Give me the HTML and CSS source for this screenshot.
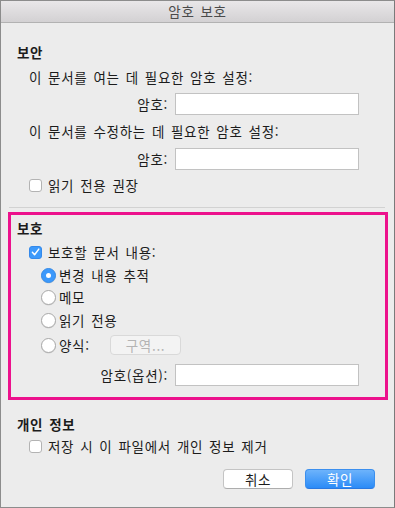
FILE: index.html
```html
<!DOCTYPE html>
<html lang="ko">
<head>
<meta charset="utf-8">
<link rel="stylesheet" href="styles.css">
</head>
<body>
<div class="window">
  <div class="titlebar">암호 보호</div>
  <div class="content">
    <div class="row head">보안</div>
    <div class="row text indent1 gap5">이 문서를 여는 데 필요한 암호 설정:</div>
    <div class="field gap6"><span class="label">암호:</span><span class="input"></span></div>
    <div class="row text indent1 gap6">이 문서를 수정하는 데 필요한 암호 설정:</div>
    <div class="field gap7"><span class="label">암호:</span><span class="input"></span></div>
    <div class="row check gap5"><span class="cb"></span><span>읽기 전용 권장</span></div>
    <div class="separator"></div>

    <div class="protect">
      <div class="row head">보호</div>
      <div class="row check pcheck gap4"><span class="cb on"><svg viewBox="0 0 12 12" width="12" height="12"><path d="M2.6 6.4 L5 9 L9.6 2.8" fill="none" stroke="#fff" stroke-width="1.6" stroke-linecap="round" stroke-linejoin="round"/></svg></span><span>보호할 문서 내용:</span></div>
      <div class="row radio gap3"><span class="rb on"></span><span>변경 내용 추적</span></div>
      <div class="row radio gap2"><span class="rb"></span><span>메모</span></div>
      <div class="row radio gap3"><span class="rb"></span><span>읽기 전용</span></div>
      <div class="row radio gap5"><span class="rb"></span><span class="form-label">양식:</span><span class="btn-disabled">구역...</span></div>
      <div class="field gap9"><span class="label">암호(옵션):</span><span class="input"></span></div>
    </div>

    <div class="row head gap14">개인 정보</div>
    <div class="row check gap2"><span class="cb"></span><span>저장 시 이 파일에서 개인 정보 제거</span></div>
    <div class="buttons">
      <span class="btn">취소</span>
      <span class="btn primary">확인</span>
    </div>
  </div>
</div>
</body>
</html>
```

FILE: styles.css
```css
* { box-sizing: border-box; }
html, body { margin: 0; padding: 0; }
body {
  width: 395px;
  height: 508px;
  font-family: "Noto Sans CJK KR", "Noto Sans", sans-serif;
  font-size: 13.5px;
  letter-spacing: 0.7px;
  word-spacing: 1.5px;
  color: #1c1c1c;
  background: #ececec;
}
.window {
  width: 395px;
  height: 508px;
  border: 1px solid #8c8c8c;
  border-right-color: #7a7a7a;
  background: #ececec;
  display: flex;
  flex-direction: column;
}
.titlebar {
  height: 22px;
  flex: none;
  background: linear-gradient(#e9e7e9, #d3d1d3);
  border-bottom: 1px solid #b2b2b2;
  text-align: center;
  line-height: 20px;
  color: #4a4a4a;
  font-size: 13.5px;
}
.content {
  padding: 19px 0 0 16px;
  display: flex;
  flex-direction: column;
}
.row {
  height: 20px;
  display: flex;
  align-items: center;
  white-space: nowrap;
}
.head { font-weight: bold; }
.indent1 { padding-left: 12px; }
.gap2 { margin-top: 2px; }
.gap3 { margin-top: 3px; }
.gap4 { margin-top: 4px; }
.gap5 { margin-top: 5px; }
.gap6 { margin-top: 6px; }
.gap7 { margin-top: 7px; }
.gap9 { margin-top: 9px; }
.gap14 { margin-top: 14px; }

.field {
  height: 22px;
  display: flex;
  align-items: center;
}
.label {
  width: 158px;
  text-align: right;
  padding-right: 7px;
  white-space: nowrap;
}
.input {
  width: 184px;
  height: 22px;
  background: #fff;
  border: 1px solid #c2c2c2;
}

.check { padding-left: 12px; }
.cb {
  width: 13px;
  height: 13px;
  border: 1px solid #b3b3b3;
  border-radius: 3px;
  background: #fff;
  margin-right: 6px;
  flex: none;
  display: flex;
  align-items: center;
  justify-content: center;
}
.cb.on {
  background: #3c99fb;
  border-color: #3489ea;
}
.separator {
  height: 1px;
  background: #d2d2d2;
  margin: 12px 9px 0 -8px;
}
.protect {
  margin: 4px 6px 0 -9px;
  height: 188px;
  border: 3px solid #ec118c;
  padding: 3px 0 0 6px;
  display: flex;
  flex-direction: column;
}
.radio { padding-left: 24px; }
.rb {
  width: 15px;
  height: 15px;
  border-radius: 50%;
  background: #fff;
  border: 1px solid #a9a9a9;
  box-shadow: 0 0.5px 0.5px rgba(0,0,0,0.12);
  margin-right: 3px;
  flex: none;
  position: relative;
}
.rb.on {
  background: #3c99fb;
  border-color: #348be9;
}
.rb.on::after {
  content: "";
  position: absolute;
  left: 4px;
  top: 4px;
  width: 5px;
  height: 5px;
  border-radius: 50%;
  background: #fff;
}
.form-label { width: 51px; }
.btn-disabled {
  width: 71px;
  height: 20px;
  border: 1px solid #d9d9d9;
  border-radius: 4px;
  background: #f3f3f3;
  color: #b4b4b4;
  display: flex;
  align-items: center;
  justify-content: center;
}

.buttons {
  margin-top: 13px;
  display: flex;
  justify-content: flex-end;
  gap: 12px;
  padding-right: 19px;
}
.btn {
  width: 70px;
  height: 20px;
  border-radius: 4px;
  background: #fff;
  border: 1px solid #c4c4c4;
  border-bottom-color: #adadad;
  display: flex;
  align-items: center;
  justify-content: center;
  color: #1c1c1c;
}
.btn.primary {
  background: linear-gradient(#6db3fb, #2b8bf7);
  border-color: #3b8fee;
  border-bottom-color: #2a78e0;
  color: #fff;
}
```
